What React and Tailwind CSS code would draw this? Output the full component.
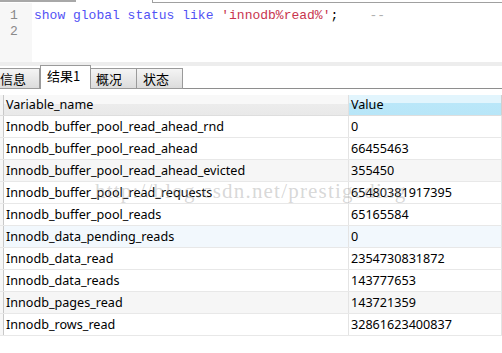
import React from "react";

// Query editor + result grid (Navicat style)
const rows = [
  { name: "Innodb_buffer_pool_read_ahead_rnd", value: "0", bg: "bg-white" },
  { name: "Innodb_buffer_pool_read_ahead", value: "66455463", bg: "bg-white" },
  { name: "Innodb_buffer_pool_read_ahead_evicted", value: "355450", bg: "bg-[#f6f6f6]" },
  { name: "Innodb_buffer_pool_read_requests", value: "65480381917395", bg: "bg-white" },
  { name: "Innodb_buffer_pool_reads", value: "65165584", bg: "bg-white" },
  { name: "Innodb_data_pending_reads", value: "0", bg: "bg-[#f2f8fd]" },
  { name: "Innodb_data_read", value: "2354730831872", bg: "bg-white" },
  { name: "Innodb_data_reads", value: "143777653", bg: "bg-white" },
  { name: "Innodb_pages_read", value: "143721359", bg: "bg-[#f6f6f6]" },
  { name: "Innodb_rows_read", value: "32861623400837", bg: "bg-white" },
];

function Tabs() {
  return (
    <div className="relative h-[23px] flex items-end border-b border-[#8e8e8e] font-['Noto_Sans_CJK_SC',sans-serif] text-[13px] text-black">
      <div className="h-[21px] w-[40px] -mb-px border-t border-r border-b border-[#9a9a9a] bg-gradient-to-b from-[#f4f4f4] to-[#dcdcdc] leading-[20px]">
        信息
      </div>
      <div className="h-[24px] w-[51px] -mb-px border-x border-t border-[#9a9a9a] bg-white pl-[6px] leading-[20px] relative z-10">
        结果1
      </div>
      <div className="h-[21px] w-[46px] -mb-px border-t border-r border-b border-[#9a9a9a] bg-gradient-to-b from-[#f4f4f4] to-[#dcdcdc] pl-[5px] leading-[20px]">
        概况
      </div>
      <div className="h-[21px] w-[46px] -mb-px border-t border-r border-b border-[#9a9a9a] bg-gradient-to-b from-[#f4f4f4] to-[#dcdcdc] pl-[6px] leading-[20px]">
        状态
      </div>
    </div>
  );
}

function Grid() {
  return (
    <div className="font-['Noto_Sans','Noto_Sans_CJK_SC',sans-serif] text-[12.6px] text-black">
      <div className="flex h-[21px] border-b border-[#dedede]">
        <div className="w-[4px] border-r border-[#c8c8c8] bg-[#f4f4f4]" />
        <div className="w-[345px] pl-[2px] leading-[20px] bg-[linear-gradient(#f8f8f8_0%,#f8f8f8_45%,#ececec_45%,#e9e9e9_100%)] border-r border-[#e0e0e0]">
          Variable_name
        </div>
        <div className="flex-1 pl-[2px] leading-[20px] bg-[linear-gradient(#e2f5fd_0%,#e2f5fd_40%,#bae7f9_40%,#b8e6f8_100%)] border-r border-[#d0d0d0]">
          Value
        </div>
      </div>
      {rows.map((r) => (
        <div key={r.name} className={`flex h-[22px] border-b border-[#e8e8e8] ${r.bg}`}>
          <div className="w-[4px] border-r border-[#c8c8c8] bg-[#f7f7f7]" />
          <div className="w-[345px] pl-[2px] leading-[21px] border-r border-[#e4e4e4] whitespace-nowrap">
            {r.name}
          </div>
          <div className="flex-1 pl-[2px] leading-[21px] border-r border-[#e4e4e4]">{r.value}</div>
        </div>
      ))}
    </div>
  );
}

export default function App() {
  return (
    <div className="relative w-[502px] h-[353px] bg-white overflow-hidden">
      {/* top strip */}
      <div className="flex h-[3px]">
        <div className="w-[76px] bg-[#a8a8a8] h-[2px]" />
        <div className="w-[76px]" />
        <div className="flex-1 border-l border-b border-[#a0a0a0]" />
      </div>

      {/* editor */}
      <div className="flex h-[59px] font-['Liberation_Mono',monospace] text-[13px] leading-[16px]">
        <div className="w-[32px] bg-[#f7f7f7] pt-[5px] pl-[10px] text-[#8a8a8a]">
          <div>1</div>
          <div>2</div>
        </div>
        <div className="pt-[5px] pl-[2px] whitespace-pre">
          <span className="text-[#5252f5]">show global status like </span>
          <span className="text-[#c8344e]">'innodb%read%'</span>
          <span className="text-black">;</span>
          <span className="text-[#b0b0b0]">    --</span>
        </div>
      </div>

      <div className="h-[4px] bg-[#ededed]" />

      <Tabs />

      <div className="h-[6px]" />

      <Grid />

      {/* watermark */}
      <div className="absolute left-[95px] top-[176px] font-['Liberation_Serif',serif] text-[21px] tracking-[1.2px] text-[#9a9a9a]/40 whitespace-nowrap pointer-events-none">
        http://blog.csdn.net/prestigeding
      </div>
    </div>
  );
}
